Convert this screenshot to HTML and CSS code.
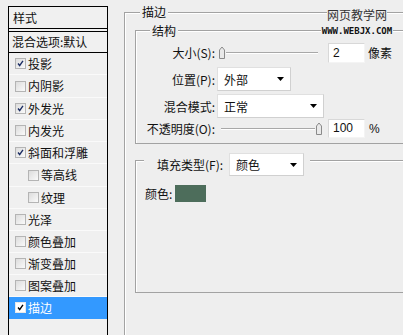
FILE: index.html
```html
<!DOCTYPE html>
<html>
<head>
<meta charset="utf-8">
<link rel="stylesheet" href="styles.css">
</head>
<body>
<div class="page">
  <div class="styles-panel">
    <div class="sp-header">样式</div>
    <div class="sp-blend">混合选项:默认</div>
    <div class="sp-row"><span class="cb on"><svg viewBox="0 0 11 11"><path d="M2.5 5.5 L4.5 8 L8.5 2.2"/></svg></span>投影</div>
    <div class="sp-row tall"><span class="cb"></span>内阴影</div>
    <div class="sp-row"><span class="cb on"><svg viewBox="0 0 11 11"><path d="M2.5 5.5 L4.5 8 L8.5 2.2"/></svg></span>外发光</div>
    <div class="sp-row"><span class="cb"></span>内发光</div>
    <div class="sp-row"><span class="cb on"><svg viewBox="0 0 11 11"><path d="M2.5 5.5 L4.5 8 L8.5 2.2"/></svg></span>斜面和浮雕</div>
    <div class="sp-row sub tall"><span class="cb"></span>等高线</div>
    <div class="sp-row sub"><span class="cb"></span>纹理</div>
    <div class="sp-row"><span class="cb"></span>光泽</div>
    <div class="sp-row"><span class="cb"></span>颜色叠加</div>
    <div class="sp-row"><span class="cb"></span>渐变叠加</div>
    <div class="sp-row"><span class="cb"></span>图案叠加</div>
    <div class="sp-row selected"><span class="cb on white"><svg viewBox="0 0 11 11"><path d="M2.5 5.5 L4.5 8 L8.5 2.2"/></svg></span>描边</div>
  </div>

  <div class="group outer">
    <div class="g-title">描边</div>
    <div class="group struct">
      <div class="g-title small">结构</div>
      <div class="rows">
        <div class="row r1">
          <span class="lbl">大小(S):</span>
          <div class="slider s1">
            <svg class="thumb" viewBox="0 0 8 13"><path d="M1.5 12.5 V4 L4 1 L6.5 4 V12.5 Z"/></svg>
            <span class="track"></span>
          </div>
          <span class="input">2</span>
          <span class="unit">像素</span>
        </div>
        <div class="row r2">
          <span class="lbl">位置(P):</span>
          <div class="select w74"><span>外部</span><svg viewBox="0 0 7 4"><path d="M0 0 H7 L3.5 4 Z"/></svg></div>
        </div>
        <div class="row r3">
          <span class="lbl">混合模式:</span>
          <div class="select w107"><span>正常</span><svg viewBox="0 0 7 4"><path d="M0 0 H7 L3.5 4 Z"/></svg></div>
        </div>
        <div class="row r4">
          <span class="lbl">不透明度(O):</span>
          <div class="slider s4">
            <span class="track"></span>
            <svg class="thumb" viewBox="0 0 8 13"><path d="M1.5 12.5 V4 L4 1 L6.5 4 V12.5 Z"/></svg>
          </div>
          <span class="input">100</span>
          <span class="unit">%</span>
        </div>
      </div>
    </div>

    <div class="group fill">
      <div class="legend">
        <span class="fl-lbl">填充类型(F):</span>
        <div class="select w75"><span>颜色</span><svg viewBox="0 0 7 4"><path d="M0 0 H7 L3.5 4 Z"/></svg></div>
      </div>
      <div class="color-row">
        <span>颜色:</span>
        <span class="swatch"></span>
      </div>
    </div>
  </div>
</div>
<div class="watermark">
  <div class="wm-cn"><span>网页教学网</span></div>
  <div class="wm-en"><span>WWW.WEBJX.COM</span></div>
</div>
</body>
</html>
```

FILE: styles.css
```css
* { box-sizing: border-box; }
html, body {
  margin: 0;
  padding: 0;
  width: 403px;
  height: 335px;
  overflow: hidden;
  background: #eeeeee;
  font-family: "Noto Sans CJK SC", "Liberation Sans", sans-serif;
  font-size: 12px;
  color: #111;
}
.page {
  display: flex;
  align-items: flex-start;
  height: 335px;
  overflow: hidden;
}

/* left styles list */
.styles-panel {
  flex: none;
  margin: 6px 0 0 8px;
  width: 100px;
  height: 329px;
  border: 1px solid #000;
  border-bottom: none;
  background: #f0f0f0;
}
.sp-header {
  height: 22px;
  border-bottom: 1px solid #000;
  padding-left: 4px;
  line-height: 21px;
  margin-bottom: 2px;
}
.sp-blend {
  height: 22px;
  border-top: 1px solid #000;
  border-bottom: 1px solid #000;
  padding-left: 3px;
  line-height: 20px;
}
.sp-row {
  height: 22px;
  display: flex;
  align-items: center;
  gap: 2px;
  padding-left: 6px;
  border-bottom: 1px solid #fafafa;
  line-height: 1;
}
.sp-row.tall { height: 23px; }
.sp-row.sub { padding-left: 19px; }
.sp-row.selected {
  background: #3399ff;
  color: #fff;
  border-bottom-color: #3399ff;
}
.cb {
  width: 11px;
  height: 11px;
  border: 1px solid #b4b4b4;
  background: linear-gradient(135deg, #dcdcdc, #fafafa);
  display: inline-flex;
  flex: none;
}
.cb svg { width: 9px; height: 9px; }
.cb svg path {
  fill: none;
  stroke: #1b2d63;
  stroke-width: 1.7;
}
.cb.white { background: #fff; border-color: #e8e8e8; }
.cb.white svg path { stroke: #000; }

/* group boxes */
.group {
  border-top: 1px solid #a2a2a2;
  border-left: 1px solid #a2a2a2;
  box-shadow: inset 1px 1px 0 #ffffff;
}
.outer {
  flex: none;
  margin: 12px 0 0 16px;
  width: 300px;
  height: 323px;
}
.g-title {
  display: block;
  width: fit-content;
  background: #eeeeee;
  line-height: 16px;
  height: 16px;
  padding: 0 2px;
  margin: -9px 0 0 15px;
}
.g-title.small { margin: -8px 0 0 14px; }
.struct {
  margin: 10px 0 0 10px;
  height: 114px;
  border-bottom: 1px solid #a2a2a2;
}
.rows { margin-top: 3px; }
.row {
  display: flex;
  align-items: center;
}
.lbl {
  width: 80px;
  text-align: right;
  padding-right: 1px;
  flex: none;
}
.r1 { height: 21px; }
.r2 { height: 24px; margin-top: 4px; }
.r3 { height: 24px; margin-top: 3px; }
.r4 { height: 19px; margin-top: 1px; }

.slider {
  display: flex;
  align-items: center;
  height: 13px;
  flex: none;
}
.s1 { margin-left: 2px; width: 100px; }
.s4 { margin-left: 5px; width: 102px; }
.track {
  flex: 1;
  height: 2px;
  border-top: 1px solid #a8a8a8;
  border-bottom: 1px solid #ffffff;
}
.thumb { width: 8px; height: 13px; flex: none; }
.thumb path { fill: #e9e9e9; stroke: #8a8a8a; stroke-width: 1; }
.input {
  flex: none;
  width: 37px;
  height: 20px;
  background: #fff;
  border: 1px solid #d8d8d8;
  border-right-color: #f4f4f4;
  border-bottom-color: #f4f4f4;
  padding-left: 4px;
  line-height: 18px;
  font-family: "Liberation Sans", sans-serif;
  font-size: 12px;
}
.s1 + .input { margin-left: 10px; }
.s4 + .input { margin-left: 5px; height: 19px; line-height: 17px; }
.unit { margin-left: 3px; flex: none; }
.r4 .unit { margin-left: 4px; font-family: "Liberation Sans", sans-serif; }

.select {
  flex: none;
  height: 24px;
  background: #fff;
  border: 1px solid #e0e0e0;
  border-right-color: #d0d0d0;
  border-bottom-color: #d0d0d0;
  display: flex;
  align-items: center;
  justify-content: space-between;
  padding: 0 6px;
  margin-left: 1px;
}
.select svg { width: 7px; height: 4px; }
.select svg path { fill: #000; }
.w74 { width: 74px; }
.w107 { width: 107px; }
.w75 { width: 75px; height: 23px; margin-left: 6px; }

.fill {
  margin: 16px 0 0 10px;
  height: 133px;
  border-bottom: 1px solid #a2a2a2;
}
.legend {
  display: flex;
  width: fit-content;
  align-items: center;
  background: #eeeeee;
  margin: -8px 0 0 8px;
  padding: 0 6px 0 13px;
}
.color-row {
  display: flex;
  align-items: center;
  gap: 3px;
  margin: 9px 0 0 9px;
  height: 17px;
}
.swatch {
  width: 31px;
  height: 17px;
  background: #4d6d5b;
}

/* watermark */
.watermark {
  position: absolute;
  left: 318px;
  top: 8px;
  width: 78px;
  text-align: center;
}
.wm-cn { height: 14px; line-height: 14px; }
.wm-cn span {
  background: #eeeeee;
  color: #333;
  font-size: 12px;
}
.wm-en { margin-top: 3px; height: 8px; line-height: 8px; }
.wm-en span {
  background: #eeeeee;
  font-family: "DejaVu Sans Mono", monospace;
  font-weight: bold;
  font-size: 9px;
  color: #111;
  padding: 0 1px;
}
```
